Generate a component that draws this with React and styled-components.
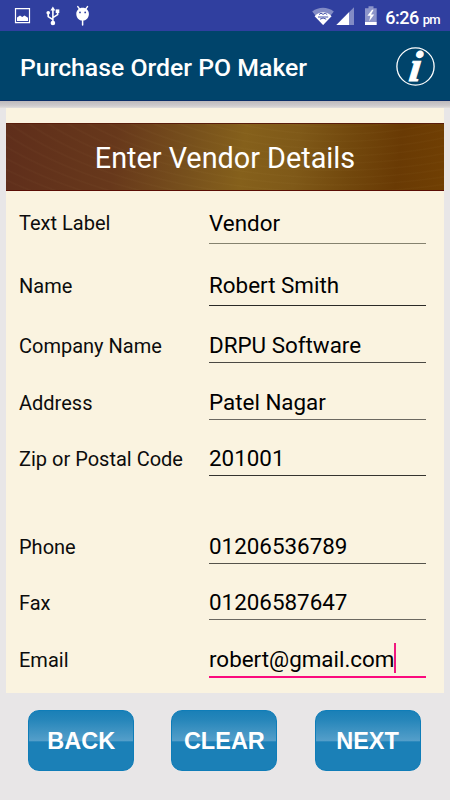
import React, { useState } from "react";
import styled, { createGlobalStyle } from "styled-components";

const GlobalStyle = createGlobalStyle`
  * {
    box-sizing: border-box;
  }

  body {
    margin: 0;
    background: #e8e6e7;
    font-family: Roboto, "Liberation Sans", sans-serif;
  }
`;

const Screen = styled.div`
  display: flex;
  flex-direction: column;
  width: 450px;
  height: 800px;
  overflow: hidden;
  background: #e8e6e7;
`;

const StatusBar = styled.div`
  display: flex;
  flex: none;
  justify-content: space-between;
  height: 31px;
  background: #303f9f;
  color: #ffffff;
`;

const StatusIcon = styled.svg`
  display: block;
  height: 31px;
`;

const Clock = styled.div`
  display: flex;
  align-items: baseline;
  justify-content: flex-end;
  gap: 4px;
  width: 66px;
  padding: 7px 10px 0 0;
  font-size: 18px;
  font-weight: 500;
  line-height: 21px;
  letter-spacing: -0.5px;

  small {
    font-size: 13px;
    letter-spacing: -0.7px;
  }
`;

const StatusRight = styled.div`
  display: flex;
`;

const AppBar = styled.header`
  display: flex;
  flex: none;
  align-items: center;
  justify-content: space-between;
  height: 70px;
  padding: 0 14px 0 20px;
  background: #00446b;
  border-bottom: 1px solid #0a2f68;
  color: #ffffff;
`;

const Title = styled.h1`
  margin: 5px 0 0;
  font-size: 24.8px;
  font-weight: 500;
  line-height: 30px;
  white-space: nowrap;
`;

const InfoIcon = styled.svg`
  display: block;
  width: 40px;
  height: 40px;
  overflow: visible;
`;

const Shadow = styled.div`
  flex: none;
  height: 7px;
  background: linear-gradient(#bdb9bb, #cfccce 70%, #e2dfdc);
`;

const Panel = styled.main`
  flex: none;
  width: 438px;
  height: 585px;
  margin-left: 6px;
  padding-top: 15px;
  background: #faf3e0;
`;

const Banner = styled.h2`
  display: flex;
  align-items: center;
  justify-content: center;
  height: 68px;
  margin: 0;
  padding-top: 2px;
  border: 1px solid #6b3a12;
  border-width: 1px 0;
  border-top-color: #591d0c;
  border-bottom-color: #5a0d05;
  background:
    repeating-radial-gradient(
      ellipse 420px 190px at 330px -90px,
      rgba(255, 220, 150, 0) 0 11px,
      rgba(255, 220, 150, 0.025) 13px 14px,
      rgba(255, 220, 150, 0) 16px
    ),
    linear-gradient(
      97deg,
      #5f2e1b 0%,
      #67381b 25%,
      #77501c 42%,
      #85601b 54%,
      #7f5918 66%,
      #72480d 78%,
      #693a04 89%,
      #703f03 100%
    );
  color: #ffffff;
  font-size: 28.8px;
  font-weight: 400;
  line-height: 34px;
`;

const Row = styled.label`
  display: grid;
  grid-template-columns: 190px 217px;
  align-items: end;
  height: ${(props) => props.$height}px;
  padding-left: 13px;
  color: #0c0c0c;
`;

const Label = styled.span`
  padding-bottom: ${(props) => props.$drop}px;
  font-size: 20px;
  line-height: 24px;
  white-space: nowrap;
`;

const Value = styled.span`
  display: flex;
  align-items: center;
  padding-bottom: ${(props) => props.$drop}px;
  border-bottom: ${(props) =>
    props.$focused ? "2px solid #fb0a7d" : `1px solid ${props.$line}`};
  font-size: 22.4px;
  line-height: 26px;
  color: #000000;
`;

const Caret = styled.i`
  width: 2px;
  height: 30px;
  margin: -4px 0 -2px;
  background: #f0187e;
`;

const Actions = styled.footer`
  display: flex;
  gap: 37.2px;
  padding: 17.4px 0 0 28.2px;
`;

const ActionButton = styled.button`
  width: 106px;
  height: 61px;
  padding: 0;
  border: 1.5px solid #0f7db8;
  border-radius: 11px;
  background: linear-gradient(
    #1a80b7 0%,
    #2686ba 15%,
    #559fca 51%,
    #1b80b7 52%,
    #1b80b7 100%
  );
  color: #ffffff;
  font-family: "Liberation Sans", Arial, sans-serif;
  font-size: 23.5px;
  font-weight: 700;
  line-height: 28px;
`;

const fields = [
  { label: "Text Label", value: "Vendor", height: 53, drop: 7, labelDrop: 9, line: "#85826f" },
  { label: "Name", value: "Robert Smith", height: 62, drop: 7, labelDrop: 8, line: "#2b2a27" },
  { label: "Company Name", value: "DRPU Software", height: 57, drop: 4, labelDrop: 5, line: "#4b4943" },
  { label: "Address", value: "Patel Nagar", height: 57, drop: 4, labelDrop: 5, line: "#6b6860" },
  { label: "Zip or Postal Code", value: "201001", height: 56, drop: 4, labelDrop: 5, line: "#35342f" },
  { label: "Phone", value: "01206536789", height: 88, drop: 4, labelDrop: 5, line: "#55534b" },
  { label: "Fax", value: "01206587647", height: 56, drop: 4, labelDrop: 5, line: "#6b6860" },
  { label: "Email", value: "robert@gmail.com", height: 58, drop: 4, labelDrop: 6 },
];

function Notifications() {
  return (
    <StatusIcon width="110" viewBox="0 0 110 31" fill="#fff">
      {/* picture */}
      <path d="M15.5 8.6h14v14h-14z" fill="none" stroke="#fff" strokeWidth="1.2" />
      <path d="M17 21v-3.6l3-1.8 2.2 1.3 2.3-1.4 3.5 2.3V21z" />
      {/* usb */}
      <g fill="none" stroke="#fff" strokeWidth="1.6">
        <path d="M52.9 9v13M52.9 19.6l-4.7-3v-4M52.9 17.6l4.7-3v-3.4" />
      </g>
      <path d="M52.9 6.6l2.5 3.9h-5z" />
      <circle cx="52.9" cy="23" r="2.3" />
      <circle cx="48.2" cy="12.8" r="1.8" />
      <path d="M55.7 9.4h3.6v3.6h-3.6z" />
      {/* debugging */}
      <path
        d="M77.8 6.6l2.2 3M87.5 6.6l-2.2 3M82.6 18v7"
        stroke="#fff"
        strokeWidth="1.5"
        strokeLinecap="round"
      />
      <path d="M82.6 7.8c3.6 0 6.3 2.7 6.3 6.1 0 3.7-2.7 6.7-6.3 6.7s-6.3-3-6.3-6.7c0-3.4 2.7-6.1 6.3-6.1z" />
      <circle cx="80" cy="12.4" r="0.9" fill="#303f9f" />
      <circle cx="85.2" cy="12.4" r="0.9" fill="#303f9f" />
    </StatusIcon>
  );
}

function Connectivity() {
  return (
    <StatusIcon width="74" viewBox="310 0 74 31" fill="#fff">
      {/* wifi */}
      <path d="M312.2 11.6c6.6-5 15-5 21.6 0L323.1 25z" opacity="0.4" />
      <path d="M314.6 16.2c4.8-5.4 12.2-5.4 17 0L323.1 24.9z" />
      <path
        d="M319 14.6l2-1.4 2.1 1.2 2.1-1.2 2 1.4M318 17h10.2M320 19.2l3.1-1.2 3.1 1.2"
        fill="none"
        stroke="#303f9f"
        strokeWidth="0.9"
      />
      {/* signal */}
      <path d="M354 7.3V25h-17.6z" opacity="0.4" />
      <path d="M349 12.3V25h-12.6z" />
      {/* battery */}
      <path d="M368.5 6.2h5v2h3.2v14H365v-14h3.5z" opacity="0.45" />
      <path d="M365 22h11.7v3H365z" />
      <path d="M372 9.8l-4.6 6h3l-1.2 5.4 5-6.6H371l2.6-4.8z" />
    </StatusIcon>
  );
}

function Info() {
  return (
    <InfoIcon viewBox="0 0 40 40">
      <circle cx="19.5" cy="20.5" r="18.6" fill="none" stroke="#fff" strokeWidth="1.3" />
      <text
        transform="translate(18 34.8) skewX(-7)"
        fill="#fff"
        stroke="#fff"
        strokeWidth="1.1"
        textAnchor="middle"
        fontFamily="Liberation Serif, Times New Roman, serif"
        fontSize="43"
        fontStyle="italic"
        fontWeight="700"
      >
        i
      </text>
    </InfoIcon>
  );
}

export default function App() {
  const [focused] = useState("Email");

  return (
    <>
      <GlobalStyle />
      <Screen>
        <StatusBar>
          <Notifications />
          <StatusRight>
            <Connectivity />
            <Clock>
              6:26<small>pm</small>
            </Clock>
          </StatusRight>
        </StatusBar>
        <AppBar>
          <Title>Purchase Order PO Maker</Title>
          <Info />
        </AppBar>
        <Shadow />
        <Panel>
          <Banner>Enter Vendor Details</Banner>
          {fields.map((el) => (
            <Row key={el.label} $height={el.height}>
              <Label $drop={el.labelDrop}>{el.label}</Label>
              <Value $drop={el.drop} $line={el.line} $focused={el.label === focused}>
                {el.value}
                {el.label === focused && <Caret />}
              </Value>
            </Row>
          ))}
        </Panel>
        <Actions>
          <ActionButton>BACK</ActionButton>
          <ActionButton>CLEAR</ActionButton>
          <ActionButton>NEXT</ActionButton>
        </Actions>
      </Screen>
    </>
  );
}
